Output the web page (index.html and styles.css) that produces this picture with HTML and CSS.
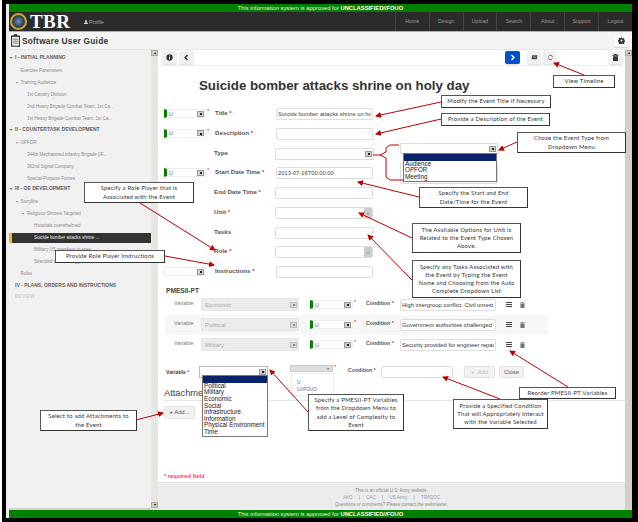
FILE: index.html
```html
<!DOCTYPE html>
<html lang="en">

<head>
    <meta charset="UTF-8">
    <meta name="viewport" content="width=device-width, initial-scale=1.0">
    <title>TBR Software User Guide</title>
    <link rel="stylesheet" href="styles.css">
</head>

<body>
    <svg class="icon-defs" width="0" height="0">
        <symbol id="i-gear" viewBox="0 0 16 16"><path d="M6.6 1h2.8l.4 2 1.3.6 1.8-1.1 2 2-1.1 1.8.6 1.3 2 .4v2.8l-2 .4-.6 1.3 1.1 1.8-2 2-1.8-1.1-1.3.6-.4 2H6.6l-.4-2-1.3-.6-1.8 1.1-2-2 1.1-1.8-.6-1.3-2-.4V7l2-.4.6-1.3L1.1 3.5l2-2 1.8 1.1 1.3-.6zM8 5.800a2.4 2.4 0 1 0 0 4.8 2.4 2.4 0 0 0 0-4.8z" fill-rule="evenodd"/></symbol>
        <symbol id="i-trash" viewBox="0 0 12 14"><path d="M4 0h4l1 1.500h3v2H0v-2h3zM1 4.500h10V14H1z"/></symbol>
        <symbol id="i-bars" viewBox="0 0 12 10"><path d="M0 0h12v2H0zM0 4h12v2H0zM0 8h12v2H0z"/></symbol>
    </svg>

    <div class="page">
        <div class="banner">This information system is approved for <b>UNCLASSIFIED//FOUO</b></div>

        <header class="nav">
            <div class="logo"><span class="logo-seal"></span><span class="logo-text">TBR</span></div>
            <a class="profile"><svg viewBox="0 0 8 8"><circle cx="4" cy="2.200" r="2"/><path d="M0 8c0-2.500 1.500-3.500 4-3.500S8 5.500 8 8z"/></svg> Profile</a>
            <nav class="nav-links">
                <a>Home</a><a>Design</a><a>Upload</a><a>Search</a><a>About</a><a>Support</a><a>Logout</a>
            </nav>
        </header>

        <div class="titlebar">
            <svg class="clip" viewBox="0 0 10 14"><path d="M3 0h4v1.500h3V14H0V1.500h3z" fill="#333"/><path d="M1.300 3h7.400v9.700H1.300z" fill="#fff"/><path d="M2.400 5h5.200v1H2.400zM2.400 7.200h5.200v1H2.400zM2.400 9.400h5.200v1H2.400z" fill="#333"/></svg>
            <h2>Software User Guide</h2>
            <button class="tool tool-gear"><svg><use href="#i-gear"/></svg></button>
        </div>

        <div class="content">
            <aside class="sidebar">
                <ul class="tree">
                    <li class="sec"><span class="tw">&#9662;</span>I - INITIAL PLANNING</li>
                    <li class="lvl1">Exercise Parameters</li>
                    <li class="lvl1"><span class="tw">&#9662;</span>Training Audience</li>
                    <li class="lvl2">1st Cavalry Division</li>
                    <li class="lvl2">2nd Heavy Brigade Combat Team, 1st Ca...</li>
                    <li class="lvl2">1st Heavy Brigade Combat Team, 1st Ca...</li>
                    <li class="sec"><span class="tw">&#9662;</span>II - COUNTERTASK DEVELOPMENT</li>
                    <li class="lvl1"><span class="tw">&#9662;</span>OPFOR</li>
                    <li class="lvl2">344th Mechanized Infantry Brigade (IF...</li>
                    <li class="lvl2">362nd Signal Company</li>
                    <li class="lvl2">Special-Purpose Forces</li>
                    <li class="sec"><span class="tw">&#9662;</span>III - OE DEVELOPMENT</li>
                    <li class="lvl1"><span class="tw">&#9662;</span>Storyline</li>
                    <li class="lvl2"><span class="tw">&#9662;</span>Religious Shrines Targeted</li>
                    <li class="lvl3">Hospitals overwhelmed</li>
                    <li class="lvl3 active">Suicide bomber attacks shrine ...</li>
                    <li class="lvl3">Military US members in area</li>
                    <li class="lvl3">Stranded travelers aggrieved on...</li>
                    <li class="lvl1">Roles</li>
                    <li class="sec sec-flat">IV - PLANS, ORDERS AND INSTRUCTIONS</li>
                    <li class="sec sec-flat sec-off">REVIEW</li>
                </ul>
                <div class="h-scroll"></div>
            </aside>
            <div class="side-scroll"><span class="scroll-btn">&#9652;</span><span class="scroll-btn">&#9662;</span></div>

            <main class="main">
                <div class="toolbar">
                    <button class="tool"><svg viewBox="0 0 10 10"><circle cx="5" cy="5" r="4.500" fill="#333"/><path d="M4.400 2h1.200v1.200H4.400zM4.400 4h1.200v4H4.400z" fill="#fff"/></svg></button>
                    <button class="tool"><svg viewBox="0 0 10 10"><path d="M6.500 1.500 3 5l3.500 3.500" fill="none" stroke="#333" stroke-width="2"/></svg></button>
                    <span class="spacer"></span>
                    <button class="tool tool-blue"><svg viewBox="0 0 10 10"><path d="M3.500 1.500 7 5 3.500 8.500" fill="none" stroke="#fff" stroke-width="2"/></svg></button>
                    <button class="tool tool-small"><svg viewBox="0 0 12 10"><path d="M2 1h9L10 8H1z" fill="#444"/><path d="M3 3h6M3 5h6" stroke="#ccc" stroke-width=".7"/></svg></button>
                    <button class="tool tool-small"><svg viewBox="0 0 10 10"><path d="M8 4A3.200 3.200 0 0 0 2.200 3.600M2 6a3.200 3.200 0 0 0 5.800.4" fill="none" stroke="#444" stroke-width="1.200"/></svg></button>
                    <button class="tool tool-trash"><svg><use href="#i-trash"/></svg></button>
                </div>

                <h1>Suicide bomber attacks shrine on holy day</h1>

                <form class="event-form">
                    <div class="row">
                        <div class="sel mark"><span>U</span><i></i></div><em class="req">*</em>
                        <label>Title <em>*</em></label>
                        <input class="field" value="Suicide bomber attacks shrine on holy day">
                    </div>
                    <div class="row">
                        <div class="sel mark"><span>U</span><i></i></div><em class="req">*</em>
                        <label>Description <em>*</em></label>
                        <input class="field">
                    </div>
                    <div class="row">
                        <div class="sel-gap"></div>
                        <label>Type</label>
                        <div class="sel sel-wide"><span></span><i></i></div>
                    </div>
                    <div class="row">
                        <div class="sel mark"><span>U</span><i></i></div><em class="req">*</em>
                        <label>Start Date Time <em>*</em></label>
                        <input class="field" value="2013-07-16T00:00:00">
                    </div>
                    <div class="row">
                        <div class="sel-gap"></div>
                        <label>End Date Time <em>*</em></label>
                        <input class="field field-wide">
                    </div>
                    <div class="row">
                        <div class="sel-gap"></div>
                        <label>Unit <em>*</em></label>
                        <div class="combo"><i>&#9662;</i></div>
                    </div>
                    <div class="row">
                        <div class="sel-gap"></div>
                        <label>Tasks</label>
                        <input class="field field-wide">
                    </div>
                    <div class="row">
                        <div class="sel-gap"></div>
                        <label>Role <em>*</em></label>
                        <div class="combo"><i>&#9662;</i></div>
                    </div>
                    <div class="row">
                        <div class="sel"><span></span><i></i></div>
                        <label class="label-after-plain">Instructions <em>*</em></label>
                        <input class="field">
                    </div>
                </form>

                <h3 class="section-head">PMESII-PT</h3>
                <div class="var-list">
                    <div class="var-row">
                        <span class="var-label">Variable</span>
                        <div class="sel sel-off"><span>Economic</span><i></i></div>
                        <div class="sel mark sel-class"><span>U</span><i></i></div><em class="req">*</em>
                        <span class="cond-label">Condition <em>*</em></span>
                        <input class="field cond" value="High intergroup conflict. Civil unrest is rising">
                        <svg class="ico-bars"><use href="#i-bars"/></svg>
                        <svg class="ico-trash"><use href="#i-trash"/></svg>
                    </div>
                    <div class="var-row var-row-alt">
                        <span class="var-label">Variable</span>
                        <div class="sel sel-off"><span>Political</span><i></i></div>
                        <div class="sel mark sel-class"><span>U</span><i></i></div><em class="req">*</em>
                        <span class="cond-label">Condition <em>*</em></span>
                        <input class="field cond" value="Government authorities challenged by local groups">
                        <svg class="ico-bars"><use href="#i-bars"/></svg>
                        <svg class="ico-trash"><use href="#i-trash"/></svg>
                    </div>
                    <div class="var-row">
                        <span class="var-label">Variable</span>
                        <div class="sel sel-off"><span>Military</span><i></i></div>
                        <div class="sel mark sel-class"><span>U</span><i></i></div><em class="req">*</em>
                        <span class="cond-label">Condition <em>*</em></span>
                        <input class="field cond" value="Security provided for engineer repair teams">
                        <svg class="ico-bars"><use href="#i-bars"/></svg>
                        <svg class="ico-trash"><use href="#i-trash"/></svg>
                    </div>
                </div>

                <div class="var-new">
                    <span class="new-label">Variable <em>*</em></span>
                    <div class="sel sel-new"><span></span><i></i></div>
                    <div class="sel sel-flat"><span></span><i class="plain">&#9662;</i></div><em class="req">*</em>
                    <span class="cond-label new-cond">Condition <em>*</em></span>
                    <input class="field cond-new">
                    <button class="btn btn-off" type="button">+ &nbsp;Add</button>
                    <button class="btn btn-close" type="button">Close</button>
                </div>

                <h3 class="attach-head">Attachments</h3>
                <button class="btn btn-add" type="button"><b>+</b> Add...</button>
                <p class="req-note">* required field</p>

                <footer class="footer">
                    <p>This is an official U.S. Army website.</p>
                    <p class="foot-links"><a>AKO</a> | <a>CAC</a> | <a>US Army</a> | <a>TRADOC</a></p>
                    <p>Questions or comments? Please contact the webmaster.</p>
                </footer>
            </main>
            <div class="main-scroll"><span class="scroll-btn">&#9652;</span></div>
        </div>

        <div class="banner">This information system is approved for <b>UNCLASSIFIED//FOUO</b></div>
    </div>

    <!-- dropdowns left open in the screenshot -->
    <div class="behind-list"></div>
    <div class="sel drop-sel"><span></span><i></i></div>
    <ul class="drop drop-type"><li class="hl"></li><li>Audience</li><li>OPFOR</li><li>Meeting</li></ul>
    <ul class="drop drop-var">
        <li class="hl"></li><li>Political</li><li>Military</li><li>Economic</li><li>Social</li>
        <li>Infrastructure</li><li>Information</li><li>Physical Environment</li><li>Time</li>
    </ul>
    <ul class="drop-class"><li>U</li><li>U//FOUO</li></ul>

    <!-- annotation arrows -->
    <svg class="arrows" viewBox="0 0 638 522">
        <defs>
            <marker id="head" markerWidth="6" markerHeight="6" refX="5" refY="3" orient="auto"><path d="M0 0 6 3 0 6z" fill="#c00000"/></marker>
        </defs>
        <g fill="none" stroke="#c00000" stroke-width="1" marker-end="url(#head)">
            <path d="M584 75 554 63"/>
            <path d="M441 102 376 116"/>
            <path d="M441 119 376 134"/>
            <path d="M517 142 499 150"/>
            <path d="M419 197 358 182"/>
            <path d="M412 238 359 213"/>
            <path d="M412 280 368 235"/>
            <path d="M140 203 215 250"/>
            <path d="M165 256 214 265"/>
            <path d="M568 387 510 351"/>
            <path d="M500 399 443 377"/>
            <path d="M308 412 270 370"/>
            <path d="M136 420 163 413"/>
        </g>
        <path d="M399 145H390L386 148V152L380 155H373M380 155 386 158V177L390 180H404" fill="none" stroke="#c00000"/>
    </svg>

    <!-- callouts -->
    <div class="note n-timeline">View Timeline</div>
    <div class="note n-title">Modify the Event Title if Necessary</div>
    <div class="note n-desc">Provide a Description of the Event</div>
    <div class="note n-type">Chose the Event Type from<br>Dropdown Menu</div>
    <div class="note n-dates">Specify the Start and End<br>Date/Time for the Event</div>
    <div class="note n-unit">The Available Options for Unit is<br>Related to the Event Type Chosen<br>Above.</div>
    <div class="note n-tasks">Specify any Tasks Associated with<br>the Event by Typing the Event<br>Name and Choosing from the Auto<br>Complete Dropdown List</div>
    <div class="note n-role">Specify a Role Player that is<br>Associated with the Event</div>
    <div class="note n-instr">Provide Role Player Instructions</div>
    <div class="note n-reorder">Reorder PMESII-PT Variables</div>
    <div class="note n-cond">Provide a Specified Condition<br>That will Appropriately Interact<br>with the Variable Selected</div>
    <div class="note n-pmesii">Specify a PMESII-PT Variables<br>from the Dropdown Menu to<br>add a Level of Complexity to<br>Event</div>
    <div class="note n-attach">Select to add Attachments to<br>the Event</div>
</body>

</html>
```

FILE: styles.css
```css
* {
    box-sizing: border-box;
}

html,
body {
    height: 522px;
    overflow: hidden;
}

body {
    margin: 0;
    background: #000;
    border-left: 2px solid #fff;
    padding: 4px 6px 4px 4px;
    position: relative;
    font-family: "Liberation Sans", Arial, sans-serif;
    font-size: 6px;
    color: #333;
}

.icon-defs {
    position: absolute;
}

.page {
    height: 514px;
    border-left: 3px solid #eee;
    background: #fff;
    display: flex;
    flex-direction: column;
}

.banner {
    height: 8px;
    flex: none;
    background: #008000;
    color: #e8f5e8;
    text-align: center;
    font-size: 5.8px;
    line-height: 8px;
}

.banner b {
    color: #fff;
}

/* top nav */
.nav {
    height: 20px;
    flex: none;
    background: #2b2b2b;
    border-bottom: 1px solid #d8b23a;
    display: flex;
    align-items: center;
}

.logo {
    display: flex;
    align-items: center;
    width: 75px;
}

.logo-seal {
    width: 17px;
    height: 17px;
    margin-left: 1px;
    border-radius: 50%;
    border: 2px solid #c9a437;
    background: radial-gradient(circle, #6f8fb5 0, #31445c 55%, #17202c 100%);
}

.logo-text {
    font-family: "Liberation Serif", serif;
    font-weight: 700;
    font-size: 19px;
    line-height: 19px;
    letter-spacing: .4px;
    color: #fff;
    margin-left: 3px;
}

.profile {
    color: #aaa;
    font-size: 5.2px;
    display: flex;
    align-items: center;
    gap: 1px;
}

.profile svg {
    width: 4px;
    height: 4px;
    fill: #ddd;
}

.nav-links {
    margin-left: auto;
    display: flex;
    height: 100%;
}

.nav-links a {
    width: 33.9px;
    border-left: 1px solid #444;
    color: #999;
    font-size: 5.2px;
    line-height: 19px;
    text-align: center;
}

/* title bar */
.titlebar {
    height: 18px;
    flex: none;
    background: #f5f5f5;
    border-bottom: 1px solid #e6e6e6;
    display: flex;
    align-items: center;
    padding: 0 3px 0 2px;
}

.clip {
    width: 9px;
    height: 13px;
}

.titlebar h2 {
    margin: 0 0 0 2px;
    font-size: 8.3px;
    letter-spacing: .25px;
    color: #333;
}

.tool {
    width: 15px;
    height: 13px;
    flex: none;
    padding: 0;
    border: 0;
    border-radius: 2px;
    background: #f0f0f0;
    box-shadow: 0 1px 1px rgba(0, 0, 0, .12);
    display: flex;
    align-items: center;
    justify-content: center;
}

.tool svg {
    width: 7px;
    height: 7px;
    fill: #333;
}

.tool-gear {
    margin-left: auto;
    background: #fafafa;
}

/* body area */
.content {
    flex: 1;
    min-height: 0;
    display: flex;
}

.sidebar {
    width: 142px;
    flex: none;
    background: #f1f1f1;
    padding-top: 3.5px;
    display: flex;
    flex-direction: column;
}

.h-scroll {
    margin-top: auto;
    height: 2px;
    background: #d4d0c8;
}

.tree {
    list-style: none;
    margin: 0;
    padding: 0;
}

.tree li {
    height: 12px;
    line-height: 12px;
    color: #8a8a8a;
    font-size: 4.5px;
    white-space: nowrap;
    overflow: hidden;
}

.tree .tw {
    display: inline-block;
    width: 5px;
    margin-left: -5px;
    font-size: 4px;
}

.tree .sec {
    height: 11px;
    line-height: 11px;
    margin: -1.5px 0 2px;
    font-size: 5px;
    font-weight: 700;
    color: #5f5f5f;
    padding-left: 6px;
}

.tree .sec-flat {
    margin: 0;
}

.tree .sec-off {
    color: #ccc;
}

.tree .lvl1 {
    padding-left: 11.5px;
}

.tree .lvl2 {
    padding-left: 18px;
}

.tree .lvl3 {
    padding-left: 25px;
}

.tree .active {
    height: 10px;
    line-height: 10px;
    margin: 1px 0;
    padding-left: 22px;
    background: #333;
    border-left: 3px solid #e5b92c;
    color: #eee;
}

.side-scroll {
    width: 7px;
    flex: none;
    background: #e8e6e1;
    display: flex;
    flex-direction: column;
    justify-content: space-between;
    padding-bottom: 2px;
}

.scroll-btn {
    display: block;
    width: 7px;
    height: 6px;
    background: #d4d0c8;
    border: 1px solid #aaa;
    font-size: 4px;
    line-height: 4px;
    text-align: center;
    color: #000;
}

.main-scroll {
    width: 7px;
    flex: none;
    background: #d4d0c8;
}

.main {
    flex: 1;
    min-width: 0;
    display: flex;
    flex-direction: column;
    background: #fff;
}

.toolbar {
    height: 15.5px;
    flex: none;
    border-bottom: 1px solid #eee;
    display: flex;
    gap: 2px;
    padding: 1px 2px 0 4px;
}

.spacer {
    flex: 1;
}

.toolbar .tool-blue {
    background: #0052cc;
    margin-right: 5px;
}

.toolbar .tool-small {
    width: 14px;
}

.toolbar .tool-trash {
    margin-left: 49px;
}

h1 {
    margin: 0;
    height: 42.5px;
    padding-top: 11px;
    padding-left: 41px;
    font-size: 13.3px;
    line-height: 17px;
    white-space: nowrap;
    color: #333;
    flex: none;
}

/* form rows */
.event-form {
    flex: none;
}

.row {
    height: 19.75px;
    display: flex;
    align-items: flex-start;
    padding-left: 6px;
}

.row label {
    width: 61px;
    flex: none;
    margin-left: 5px;
    font-weight: 700;
    font-size: 6.2px;
    line-height: 9px;
    color: #555;
}

.row .label-after-plain {
    margin-left: 9px;
}

em {
    font-style: normal;
    color: #e22;
}

.req {
    width: 3px;
    margin-left: 1px;
    flex: none;
    font-size: 6px;
    line-height: 7px;
}

.sel-gap {
    width: 46px;
    flex: none;
    margin-right: -1px;
}

.sel {
    width: 42px;
    height: 9px;
    margin-top: 1px;
    flex: none;
    background: #fff;
    border: 1px solid #eee;
    display: flex;
    align-items: center;
    justify-content: space-between;
    padding: 0 1px 0 2px;
    font-size: 5.4px;
    color: #666;
}

.sel i {
    width: 7px;
    height: 6px;
    flex: none;
    background: #d4d0c8;
    border: 1px solid #999;
    position: relative;
}

.sel i::after {
    content: "";
    position: absolute;
    left: 1.5px;
    top: 1.5px;
    width: 2px;
    height: 2px;
    background: #222;
}

.sel i.plain {
    background: none;
    border: 0;
    font-style: normal;
    font-size: 4px;
    line-height: 6px;
    text-align: center;
}

.sel i.plain::after {
    display: none;
}

.mark {
    border-left: 3px solid #008000;
}

.sel-wide {
    width: 99px;
    height: 12px;
    margin-top: 0;
    border-color: #ddd;
    border-radius: 2px;
}

.field {
    width: 97px;
    height: 12px;
    flex: none;
    border: 1px solid #ddd;
    border-radius: 2px;
    padding: 0 1px;
    font-family: inherit;
    font-size: 5.8px;
    color: #444;
    background: #fff;
    outline: 0;
}

.field-wide {
    width: 98px;
}

.combo {
    width: 98px;
    height: 12px;
    flex: none;
    border: 1px solid #ddd;
    border-radius: 2px;
    display: flex;
    justify-content: flex-end;
    overflow: hidden;
}

.combo i {
    width: 8px;
    background: #ccc;
    color: #888;
    font-style: normal;
    font-size: 4px;
    line-height: 11px;
    text-align: center;
}

/* PMESII-PT */
.section-head {
    margin: 0;
    padding: 0 0 0 8px;
    height: 9px;
    font-size: 6.6px;
    line-height: 9px;
    color: #444;
    flex: none;
}

.var-list {
    flex: none;
    margin-left: 7px;
    width: 383px;
}

.var-row {
    height: 20px;
    display: flex;
    align-items: center;
    padding-left: 9px;
}

.var-row-alt {
    background: #f7f7f7;
}

.var-label {
    width: 27px;
    flex: none;
    margin-top: -4px;
    color: #777;
    font-size: 5.4px;
}

.sel-off {
    width: 98px;
    height: 13px;
    margin-top: 0;
    background: #ececec;
    border-color: #e6e6e6;
    color: #aaa;
    font-size: 6px;
    padding-left: 3px;
}

.sel-off i {
    background: #ddd;
    border-color: #bbb;
}

.sel-off i::after {
    background: #888;
}

.sel-class {
    width: 43px;
    margin: 0 0 0 11px;
}

.var-row .req {
    margin-top: -5px;
}

.cond-label {
    margin: -4px 0 0 9px;
    width: 34px;
    flex: none;
    font-weight: 700;
    font-size: 5.2px;
    color: #555;
}

.cond {
    width: 96px;
    color: #333;
    margin-right: 10px;
}

.ico-bars {
    width: 6px;
    height: 5px;
    flex: none;
    fill: #444;
    margin-right: 8px;
}

.ico-trash {
    width: 5px;
    height: 6px;
    flex: none;
    fill: #777;
}

.var-new {
    margin-top: 10px;
    height: 14px;
    display: flex;
    align-items: center;
    padding-left: 8px;
    flex: none;
}

.new-label {
    width: 33px;
    flex: none;
    font-weight: 700;
    font-size: 5.2px;
    color: #444;
}

.sel-new {
    width: 69px;
    height: 12px;
    margin: 0 22px 0 0;
    border: 1px solid #bbb;
}

.sel-flat {
    width: 43px;
    height: 7px;
    margin: -6px 0 0 0;
    background: #ddd;
    border-color: #ccc;
}

.var-new .req {
    margin-top: -8px;
}

.new-cond {
    margin: -4px 0 0 11px;
    width: 33px;
}

.cond-new {
    width: 72px;
}

.btn {
    height: 12px;
    flex: none;
    margin-left: 11px;
    padding: 0 2px;
    border: 1px solid #e2e2e2;
    border-radius: 2px;
    background: #f2f2f2;
    color: #555;
    font-family: inherit;
    font-size: 5.8px;
}

.btn-off {
    width: 31px;
    color: #bbb;
}

.var-new .btn-close {
    width: 25px;
    margin-left: 4px;
}

.attach-head {
    margin: 8px 0 0 6px;
    height: 14px;
    border-bottom: 1px solid #e6e6e6;
    font-weight: 400;
    font-size: 9.3px;
    line-height: 12px;
    color: #444;
    flex: none;
}

.btn-add {
    align-self: flex-start;
    width: 31px;
    height: 13px;
    margin: 5px 0 0 6px;
    padding: 0;
}

.req-note {
    margin: 54px 0 0 6px;
    color: #f44;
    font-size: 5.8px;
    font-weight: 700;
    line-height: 7px;
    flex: none;
}

.footer {
    margin-top: auto;
    height: 28px;
    flex: none;
    background: #ececec;
    border-top: 1px solid #e4e4e4;
    text-align: center;
    color: #888;
    font-size: 4.5px;
    padding-top: 4px;
}

.footer p {
    margin: 0;
    height: 7px;
    line-height: 7px;
}

.foot-links a {
    margin: 0 5px;
    color: #8a9bb0;
}

/* open dropdowns */
.drop,
.drop-class {
    list-style: none;
    margin: 0;
    padding: 0;
    position: absolute;
    background: #fff;
    border: 1px solid #777;
    font-size: 6.3px;
    line-height: 6.65px;
    color: #222;
}

.drop li {
    height: 6.65px;
    padding-left: 1px;
    white-space: nowrap;
    overflow: hidden;
}

.drop .hl {
    background: #0a246a;
}

.drop-sel {
    position: absolute;
    left: 398px;
    top: 143px;
    width: 98px;
    height: 11px;
    margin: 0;
    border-color: #ddd;
}

.drop-type {
    left: 401px;
    top: 153px;
    width: 94px;
    height: 29px;
}

.drop-var {
    left: 200px;
    top: 375px;
    width: 66px;
    height: 62px;
}

.drop-class {
    left: 289px;
    top: 373px;
    width: 43px;
    height: 23px;
    border: 1px solid #eee;
    padding: 5px 0 0 5px;
    font-size: 4.8px;
    line-height: 7px;
    color: #666;
}

.behind-list {
    position: absolute;
    left: 398px;
    top: 163px;
    width: 98px;
    height: 21px;
    border: 1px solid #ddd;
    border-radius: 2px;
}

.arrows {
    position: absolute;
    left: -2px;
    top: 0;
    width: 638px;
    height: 522px;
    pointer-events: none;
}

/* callouts */
.note {
    position: absolute;
    background: #fff;
    border: 1px solid #555;
    border-right-color: #333;
    border-bottom-color: #333;
    font-family: Lato, "Liberation Sans", sans-serif;
    font-size: 5.9px;
    line-height: 8.2px;
    letter-spacing: .2px;
    color: #333;
    text-align: center;
    white-space: nowrap;
    display: flex;
    align-items: center;
    justify-content: center;
}

.n-timeline { left: 551px; top: 75px; width: 62px; height: 13px; }
.n-title { left: 439px; top: 95px; width: 110px; height: 13px; }
.n-desc { left: 439px; top: 113px; width: 109px; height: 13px; }
.n-type { left: 515px; top: 132px; width: 109px; height: 21px; }
.n-dates { left: 417px; top: 187px; width: 109px; height: 21px; }
.n-unit { left: 410px; top: 223px; width: 109px; height: 30px; }
.n-tasks { left: 410px; top: 260px; width: 109px; height: 38px; }
.n-role { left: 82px; top: 182px; width: 110px; height: 21px; }
.n-instr { left: 53px; top: 250px; width: 110px; height: 13px; }
.n-reorder { left: 517px; top: 387px; width: 97px; height: 12px; }
.n-cond { left: 451px; top: 399px; width: 95px; height: 30px; }
.n-pmesii { left: 306px; top: 394px; width: 96px; height: 37px; }
.n-attach { left: 38px; top: 410px; width: 97px; height: 21px; }
```
